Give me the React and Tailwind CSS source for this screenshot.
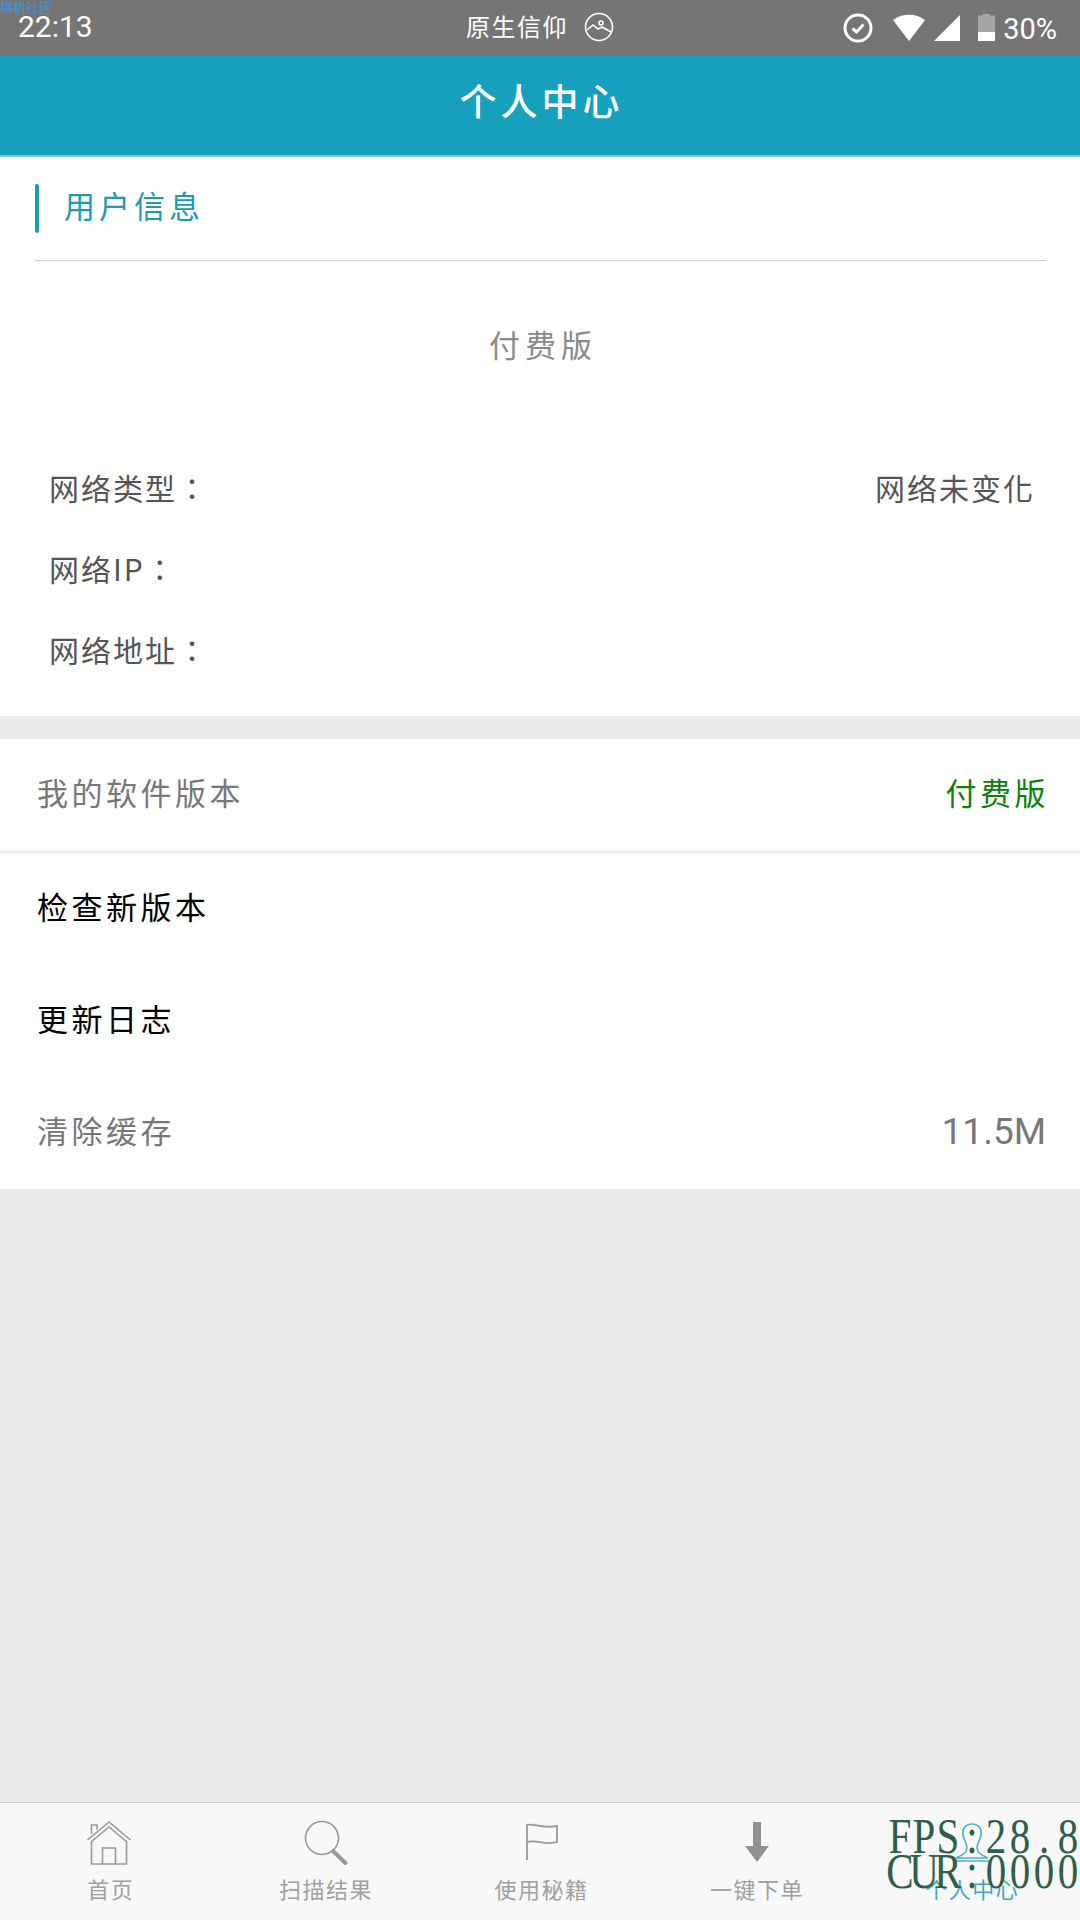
import React from 'react';

const FONT = { fontFamily: '"Noto Sans CJK SC", Roboto, sans-serif' };

function HomeIcon() {
  return (
    <svg className="overflow-visible" width="46" height="46" viewBox="2 2 46 46" fill="none" stroke="#999" strokeWidth="1.6">
      <path d="M1.5 20 L23 2 L44.5 20" />
      <path d="M5 22 L23 7 L41 22" />
      <path d="M5.5 21 V44 H40.5 V21" />
      <path d="M16.5 44 V28 H29.5 V44" />
      <path d="M5.5 14 V5 H11 V9.5" />
    </svg>
  );
}

function SearchIcon() {
  return (
    <svg className="overflow-visible" width="46" height="46" viewBox="1 2 46 46" fill="none" stroke="#999">
      <circle cx="20" cy="18" r="16.5" strokeWidth="1.6" />
      <path d="M31 31 L43.5 43" strokeWidth="4" strokeLinecap="round" />
    </svg>
  );
}

function FlagIcon() {
  return (
    <svg width="46" height="46" viewBox="0 0 46 46" fill="none" stroke="#999" strokeWidth="1.8">
      <path d="M9 2 V38" />
      <path d="M9 3 C17 1 25 7 39 4 V20 C27 24 19 17 9 20" />
    </svg>
  );
}

function DownIcon() {
  return (
    <svg width="46" height="46" viewBox="0 0 46 46" fill="#919191">
      <path d="M19 0 H27 V24 H35 L23 40 L11 24 H19 Z" />
    </svg>
  );
}

function PersonIcon() {
  return (
    <svg width="46" height="46" viewBox="0 0 46 46" fill="none" stroke="#4fb3c4" strokeWidth="1.6">
      <path d="M23 2 C16 2 13 7 14 13 C15 19 18 21 18 26 C18 31 13 33 7 36 H39 C33 33 28 31 28 26 C28 21 31 19 32 13 C33 7 30 2 23 2 Z" />
      <path d="M5 39 H41" />
    </svg>
  );
}

const TABS = [
  { label: '首页', icon: <HomeIcon />, color: 'text-[#a0a0a0]' },
  { label: '扫描结果', icon: <SearchIcon />, color: 'text-[#a0a0a0]' },
  { label: '使用秘籍', icon: <FlagIcon />, color: 'text-[#a0a0a0]' },
  { label: '一键下单', icon: <DownIcon />, color: 'text-[#a0a0a0]' },
  { label: '个人中心', icon: <PersonIcon />, color: 'text-[#3fa9bd]' },
];

function StatusBar() {
  return (
    <div className="relative flex h-[55px] items-center justify-between bg-[#757575] pl-[18px] pr-[23px] text-white">
      <span className="pb-[2px] text-[30px] leading-none" style={{ fontFamily: 'Roboto, sans-serif' }}>22:13</span>
      <div className="absolute left-[466px] top-0 flex h-[55px] items-center gap-[16px]">
        <span className="pb-[3px] text-[24px] leading-none tracking-[1.5px]">原生信仰</span>
        <svg className="mb-[1px]" width="30" height="30" viewBox="0 0 30 30" fill="none" stroke="white" strokeWidth="1.6">
          <circle cx="15" cy="15" r="13.5" />
          <circle cx="17" cy="11" r="2" />
          <path d="M3 18 L9 13 L14 17 L18 15 L27 20" />
        </svg>
      </div>
      <div className="flex items-center">
        <svg width="30" height="30" viewBox="0 0 30 30" fill="none" stroke="white">
          <circle cx="15" cy="15" r="13" strokeWidth="3" />
          <path d="M9.5 15.5 L13.5 19 L20.5 11.5" strokeWidth="3" />
        </svg>
        <svg className="ml-[20px]" width="32" height="28" viewBox="0 0 32 28" fill="white">
          <path d="M0 6 C9 -1 23 -1 32 6 L16 27 Z" />
        </svg>
        <svg className="ml-[9px]" width="26" height="26" viewBox="0 0 26 26" fill="white">
          <path d="M26 0 V26 H0 Z" />
        </svg>
        <svg className="ml-[18px]" width="17" height="27" viewBox="0 0 17 27">
          <path d="M5 0 H12 V1.5 H17 V18 H0 V1.5 H5 Z" fill="#a6a6a6" />
          <rect y="18" width="17" height="9" fill="white" />
        </svg>
        <span className="ml-[8px] pt-[3px] text-[29px] leading-none" style={{ fontFamily: 'Roboto, sans-serif' }}>30%</span>
      </div>
      {/* forum watermark */}
      <span className="absolute left-0 top-0 text-[13px] leading-[14px] text-[#3f94d8]">搞机社区</span>
    </div>
  );
}

function InfoRow({ label }) {
  return <div className="flex h-[81px] items-center tracking-[2px] text-[#555]">{label}</div>;
}

function ListRow({ label, value, labelClass, valueClass }) {
  return (
    <div className="flex h-[112px] items-center justify-between pb-[5px] pl-[37px] pr-[34px] text-[31px]">
      <span className={`tracking-[3.5px] ${labelClass}`}>{label}</span>
      {value && <span className={valueClass}>{value}</span>}
    </div>
  );
}

// the fps overlay draws every character in a fixed narrow cell
function DebugLine({ text }) {
  return (
    <div className="flex h-[35px] items-center">
      {text.split('').map((c, i) => (
        <span key={i} className="flex w-[24px] scale-x-[0.82] justify-center">{c}</span>
      ))}
    </div>
  );
}

export default function App() {
  return (
    <div className="relative flex h-[1920px] w-[1080px] flex-col overflow-hidden bg-[#ebebeb]" style={FONT}>
      <StatusBar />

      <header className="flex h-[102px] items-center justify-center border-b-2 border-[#7ccbdb] bg-[#16a0bb] pb-[8px] pl-[3px]">
        <h1 className="text-[37px] font-medium tracking-[4px] text-white">个人中心</h1>
      </header>

      <section className="bg-white">
        <div className="ml-[35px] mr-[34px] flex h-[104px] items-center border-b border-[#cfcfcf]">
          <div className="h-[49px] w-[4px] rounded-sm bg-[#1a9cb5]" />
          <span className="ml-[25px] pb-[6px] text-[31px] tracking-[4px] text-[#1f9ab2]">用户信息</span>
        </div>
        <div className="flex h-[171px] items-center justify-center pb-[5px] pl-[6px] text-[31px] tracking-[5px] text-[#8a8a8a]">付费版</div>
        <div className="relative px-[49px] pb-[26px] pt-[15px] text-[30px]" style={{ fontFamily: '"Noto Sans CJK TC", Roboto, sans-serif' }}>
          <InfoRow label="网络类型：" />
          <InfoRow label="网络IP：" />
          <InfoRow label="网络地址：" />
          <span className="absolute right-[45px] top-[33px] tracking-[2px] text-[#555]">网络未变化</span>
        </div>
      </section>

      <section className="mt-[23px] bg-white">
        <ListRow label="我的软件版本" value="付费版" labelClass="text-[#777]" valueClass="mr-[-3px] tracking-[3.5px] text-[#0c800c]" />
        <div className="h-[2px] bg-[#e6e6e6]" />
        <ListRow label="检查新版本" labelClass="text-black" />
        <ListRow label="更新日志" labelClass="text-black" />
        <ListRow label="清除缓存" value="11.5M" labelClass="text-[#777]" valueClass="pt-[3px] text-[37px] text-[#777] [font-family:Roboto,sans-serif]" />
      </section>

      <div className="flex-1" />

      <nav className="grid h-[118px] grid-cols-5 border-t border-[#c8c8c8] bg-[#f8f8f8] pl-[3px]">
        {TABS.map((t) => (
          <div key={t.label} className="flex flex-col items-center pt-[19px]">
            {t.icon}
            <span className={`mt-[6px] text-[22px] leading-[28px] tracking-[1.5px] ${t.color}`}>{t.label}</span>
          </div>
        ))}
      </nav>

      {/* debug overlay */}
      <div
        className="absolute left-[888px] top-[1819px] w-[192px] text-[50px] leading-[35px] text-[#2f5f4a]"
        style={{ fontFamily: '"Liberation Serif", serif' }}
      >
        <DebugLine text="FPS:28.8" />
        <DebugLine text="CUR:0000" />
      </div>
    </div>
  );
}
